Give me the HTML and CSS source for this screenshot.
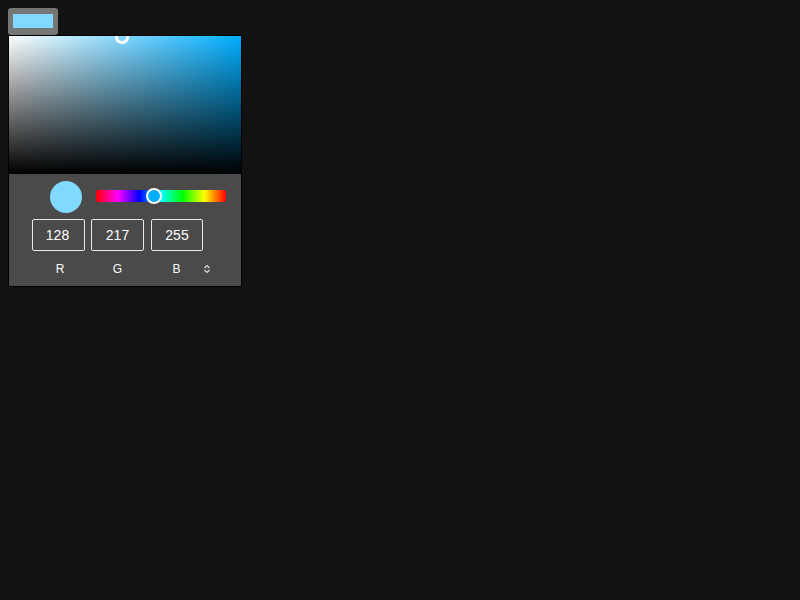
FILE: index.html
```html
<!DOCTYPE html>
<html>
<head>
<meta charset="utf-8">
<link rel="stylesheet" href="styles.css">
</head>
<body>
<div class="picker-btn"><span class="btn-swatch"></span></div>
<div class="popup">
  <div class="field">
    <span class="field-handle"></span>
  </div>
  <div class="controls">
    <div class="row-top">
      <span class="preview"></span>
      <div class="hue">
        <span class="hue-handle"></span>
      </div>
    </div>
    <div class="row-inputs">
      <div class="val">128</div>
      <div class="val">217</div>
      <div class="val">255</div>
    </div>
    <div class="row-labels">
      <span class="lbl">R</span>
      <span class="lbl">G</span>
      <span class="lbl">B</span>
      <svg class="toggle" width="8" height="10" viewBox="0 0 8 10"><path d="M1.5 4 L4 1.5 L6.5 4 M1.5 6 L4 8.5 L6.5 6" fill="none" stroke="#e0e0e0" stroke-width="1.2"/></svg>
    </div>
  </div>
</div>
</body>
</html>
```
FILE: styles.css
```css
html, body { margin: 0; padding: 0; }
body {
  background: #121212;
  padding: 8px;
  font-family: "Liberation Sans", Arial, sans-serif;
  color: #fff;
}
.picker-btn {
  width: 50px;
  height: 27px;
  box-sizing: border-box;
  background: #767676;
  border-radius: 3px;
  padding: 6px 5px 7px 5px;
}
.btn-swatch {
  display: block;
  width: 40px;
  height: 14px;
  background: rgb(128, 217, 255);
}
.popup {
  width: 234px;
  height: 252px;
  box-sizing: border-box;
  border: 1px solid #000;
  background: #4a4a4a;
  overflow: hidden;
}
.field {
  position: relative;
  height: 138px;
  background:
    linear-gradient(to bottom, rgba(0,0,0,0), #000),
    linear-gradient(to right, #fff, rgb(0, 174, 255));
}
.field-handle {
  position: absolute;
  left: 106px;
  top: -6px;
  width: 14px;
  height: 14px;
  box-sizing: border-box;
  border: 3px solid #fff;
  border-radius: 50%;
}
.controls {
  padding-top: 7px;
}
.row-top {
  display: flex;
  align-items: center;
  height: 32px;
}
.preview {
  width: 32px;
  height: 32px;
  border-radius: 50%;
  background: rgb(128, 217, 255);
  margin-left: 41px;
}
.hue {
  position: relative;
  margin-left: 14px;
  margin-bottom: 2px;
  width: 130px;
  height: 12px;
  border-radius: 2px;
  background: linear-gradient(to right, #f00 0%, #f0f 16.67%, #00f 33.33%, #0ff 50%, #0f0 66.67%, #ff0 83.33%, #f00 100%);
}
.hue-handle {
  position: absolute;
  left: 50px;
  top: -2px;
  width: 16px;
  height: 16px;
  box-sizing: border-box;
  border: 2px solid #fff;
  border-radius: 50%;
  background: rgb(0, 174, 255);
}
.row-inputs {
  display: flex;
  gap: 6px;
  margin-top: 6px;
  margin-left: 23px;
}
.val {
  width: 53px;
  height: 32px;
  box-sizing: border-box;
  border: 1px solid #e8e8e8;
  border-radius: 2px;
  display: flex;
  align-items: center;
  justify-content: center;
  font-size: 14px;
  color: #fff;
}
.val:nth-child(1) { padding-right: 2px; }
.val:nth-child(3) { width: 52px; margin-left: 1px; }
.row-labels {
  display: flex;
  align-items: center;
  margin-top: 10px;
  margin-left: 23px;
  height: 16px;
}
.lbl {
  width: 53px;
  text-align: center;
  font-size: 12px;
  color: #fff;
}
.lbl:nth-child(1) { padding-left: 3px; width: 50px; }
.lbl:nth-child(2) { margin-left: 6px; }
.lbl:nth-child(3) { margin-left: 6px; }
.toggle {
  margin-left: 0;
}
```
